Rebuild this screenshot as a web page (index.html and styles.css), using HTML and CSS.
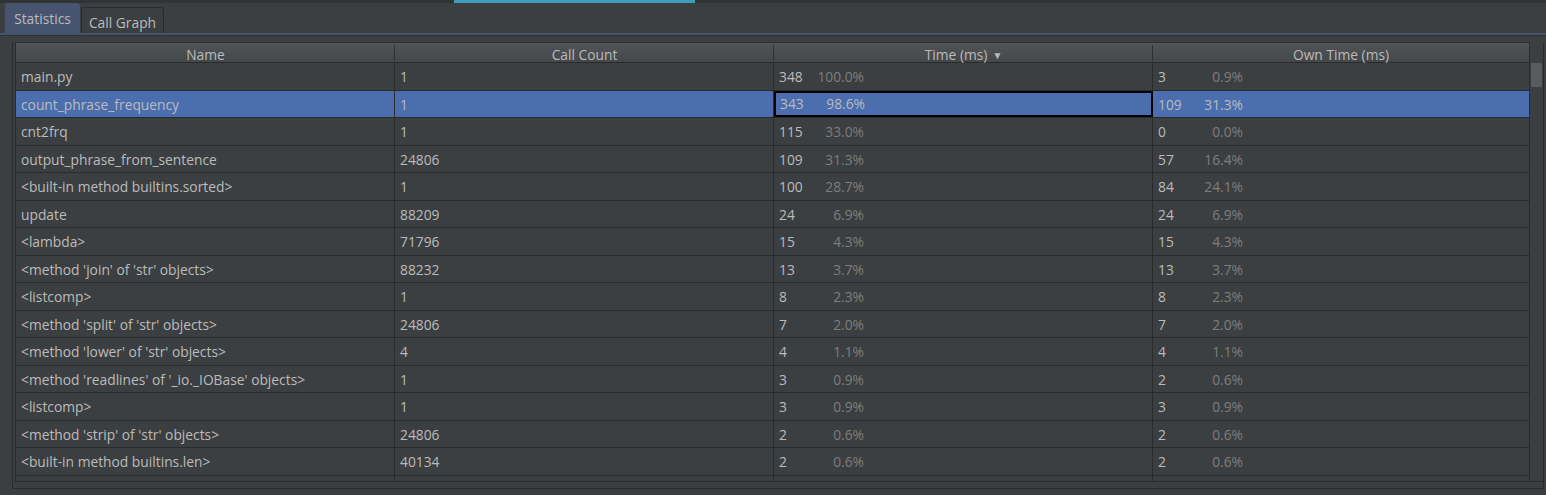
FILE: index.html
```html
<!DOCTYPE html>
<html>
<head>
<meta charset="utf-8">
<link rel="stylesheet" href="styles.css">
</head>
<body>
<div class="topstrip"><div class="accent"></div></div>
<div class="tabs">
  <div class="tab active">Statistics</div>
  <div class="tab">Call Graph</div>
</div>
<div class="tabline"></div>
<div class="pane">
  <div class="tablewrap">
    <div class="table">
      <div class="hrow">
        <div class="hcell">Name</div>
        <div class="hcell">Call Count</div>
        <div class="hcell">Time (ms) <span class="arrow">&#9660;</span></div>
        <div class="hcell last">Own Time (ms)</div>
      </div>
      <div class="row"><div class="cell">main.py</div><div class="cell">1</div><div class="cell"><span class="pair"><span>348</span><span class="p">100.0%</span></span></div><div class="cell"><span class="pair"><span>3</span><span class="p">0.9%</span></span></div></div>
      <div class="row sel"><div class="cell">count_phrase_frequency</div><div class="cell">1</div><div class="cell focus"><span class="pair"><span>343</span><span class="p">98.6%</span></span></div><div class="cell"><span class="pair"><span>109</span><span class="p">31.3%</span></span></div></div>
      <div class="row"><div class="cell">cnt2frq</div><div class="cell">1</div><div class="cell"><span class="pair"><span>115</span><span class="p">33.0%</span></span></div><div class="cell"><span class="pair"><span>0</span><span class="p">0.0%</span></span></div></div>
      <div class="row"><div class="cell">output_phrase_from_sentence</div><div class="cell">24806</div><div class="cell"><span class="pair"><span>109</span><span class="p">31.3%</span></span></div><div class="cell"><span class="pair"><span>57</span><span class="p">16.4%</span></span></div></div>
      <div class="row"><div class="cell">&lt;built-in method builtins.sorted&gt;</div><div class="cell">1</div><div class="cell"><span class="pair"><span>100</span><span class="p">28.7%</span></span></div><div class="cell"><span class="pair"><span>84</span><span class="p">24.1%</span></span></div></div>
      <div class="row"><div class="cell">update</div><div class="cell">88209</div><div class="cell"><span class="pair"><span>24</span><span class="p">6.9%</span></span></div><div class="cell"><span class="pair"><span>24</span><span class="p">6.9%</span></span></div></div>
      <div class="row"><div class="cell">&lt;lambda&gt;</div><div class="cell">71796</div><div class="cell"><span class="pair"><span>15</span><span class="p">4.3%</span></span></div><div class="cell"><span class="pair"><span>15</span><span class="p">4.3%</span></span></div></div>
      <div class="row"><div class="cell">&lt;method 'join' of 'str' objects&gt;</div><div class="cell">88232</div><div class="cell"><span class="pair"><span>13</span><span class="p">3.7%</span></span></div><div class="cell"><span class="pair"><span>13</span><span class="p">3.7%</span></span></div></div>
      <div class="row"><div class="cell">&lt;listcomp&gt;</div><div class="cell">1</div><div class="cell"><span class="pair"><span>8</span><span class="p">2.3%</span></span></div><div class="cell"><span class="pair"><span>8</span><span class="p">2.3%</span></span></div></div>
      <div class="row"><div class="cell">&lt;method 'split' of 'str' objects&gt;</div><div class="cell">24806</div><div class="cell"><span class="pair"><span>7</span><span class="p">2.0%</span></span></div><div class="cell"><span class="pair"><span>7</span><span class="p">2.0%</span></span></div></div>
      <div class="row"><div class="cell">&lt;method 'lower' of 'str' objects&gt;</div><div class="cell">4</div><div class="cell"><span class="pair"><span>4</span><span class="p">1.1%</span></span></div><div class="cell"><span class="pair"><span>4</span><span class="p">1.1%</span></span></div></div>
      <div class="row"><div class="cell">&lt;method 'readlines' of '_io._IOBase' objects&gt;</div><div class="cell">1</div><div class="cell"><span class="pair"><span>3</span><span class="p">0.9%</span></span></div><div class="cell"><span class="pair"><span>2</span><span class="p">0.6%</span></span></div></div>
      <div class="row"><div class="cell">&lt;listcomp&gt;</div><div class="cell">1</div><div class="cell"><span class="pair"><span>3</span><span class="p">0.9%</span></span></div><div class="cell"><span class="pair"><span>3</span><span class="p">0.9%</span></span></div></div>
      <div class="row"><div class="cell">&lt;method 'strip' of 'str' objects&gt;</div><div class="cell">24806</div><div class="cell"><span class="pair"><span>2</span><span class="p">0.6%</span></span></div><div class="cell"><span class="pair"><span>2</span><span class="p">0.6%</span></span></div></div>
      <div class="row"><div class="cell">&lt;built-in method builtins.len&gt;</div><div class="cell">40134</div><div class="cell"><span class="pair"><span>2</span><span class="p">0.6%</span></span></div><div class="cell"><span class="pair"><span>2</span><span class="p">0.6%</span></span></div></div>
      <div class="row partial"><div class="cell"></div><div class="cell"></div><div class="cell"></div><div class="cell"></div></div>
    </div>
    <div class="scrollbar"><div class="thumb"></div></div>
  </div>
</div>
</body>
</html>
```
FILE: styles.css
```css
* { box-sizing: border-box; }
html, body { margin: 0; padding: 0; }
body {
  width: 1546px;
  height: 495px;
  overflow: hidden;
  background: #3c3f41;
  color: #bbbbbb;
  font-family: "Open Sans", "Noto Sans", sans-serif;
  font-size: 13.8px;
}
.topstrip {
  height: 3px;
  background: #313335;
  position: relative;
}
.accent {
  position: absolute;
  left: 454px;
  width: 241px;
  top: 0;
  height: 3px;
  background: #3d9dba;
}
.tabs {
  display: flex;
  align-items: flex-end;
  height: 30px;
  padding-left: 5px;
}
.tab {
  height: 26px;
  display: flex;
  align-items: center;
  justify-content: center;
  border: 1px solid #2b2b2b;
  border-bottom: none;
  border-radius: 0 3px 0 0;
  background: #3c3f41;
  color: #bbbbbb;
  margin-left: 1px;
  white-space: nowrap;
}
.tab.active {
  height: 30px;
  margin-left: 0;
  padding: 0 0 1px 0;
  background: #465470;
  border-color: #465470;
  border-radius: 3px 3px 0 0;
  width: 75px;
}
.tab:not(.active) { width: 83px; padding-top: 3px; }
.tabline {
  height: 2px;
  background: #465470;
  border-bottom: 1px solid #2f3133;
  box-sizing: content-box;
}
.pane {
  margin: 6px 2px 0 12px;
  height: 447px;
  border: 1px solid #2b2b2b;
  border-top: none;
  padding: 0 0 0 2px;
}
.tablewrap {
  display: flex;
  height: 440px;
  border-bottom: 1px solid #2b2b2b;
}
.table {
  width: 1515px;
  border-left: 1px solid #2b2b2b;
  overflow: hidden;
}
.hrow {
  display: grid;
  grid-template-columns: 379px 379px 379px 1fr;
  height: 21px;
  background: linear-gradient(#515456, #45484a);
  border-bottom: 1px solid #2b2b2b;
  border-top: 1px solid #2e3032;
}
.hcell {
  display: flex;
  align-items: center;
  justify-content: center;
  position: relative;
  color: #bbbbbb;
  padding-top: 2px;
}
.hcell::after {
  content: "";
  position: absolute;
  right: 0;
  top: 2px;
  bottom: 3px;
  width: 1px;
  background: #2f3133;
}
.hcell.last::after { display: none; }
.arrow {
  font-size: 10px;
  margin-left: 5px;
  color: #bbbbbb;
}
.row {
  display: grid;
  grid-template-columns: 379px 379px 379px 1fr;
  height: 27.5px;
  border-bottom: 1px solid #2b2b2b;
}
.row.partial { height: 6px; border-bottom: none; }
.cell {
  display: flex;
  align-items: center;
  padding-left: 5px;
  padding-top: 1px;
  border-right: 1px solid #2b2b2b;
  white-space: nowrap;
  overflow: hidden;
}
.cell:last-child { border-right: none; }
.row.sel { background: #4b6eaf; }
.cell.focus { border: 2px solid #000; padding-left: 4px; padding-top: 0; }
.pair {
  display: flex;
  justify-content: space-between;
  width: 85px;
}
.p { color: #7d7d7d; }
.row.sel .p { color: #bbbbbb; }
.scrollbar {
  width: 14px;
  border-left: 1px solid #2b2b2b;
  background: #3c3f41;
  padding: 21px 1px 0 1px;
}
.thumb {
  height: 24px;
  background: #595c5e;
  border-radius: 1px;
}
```
